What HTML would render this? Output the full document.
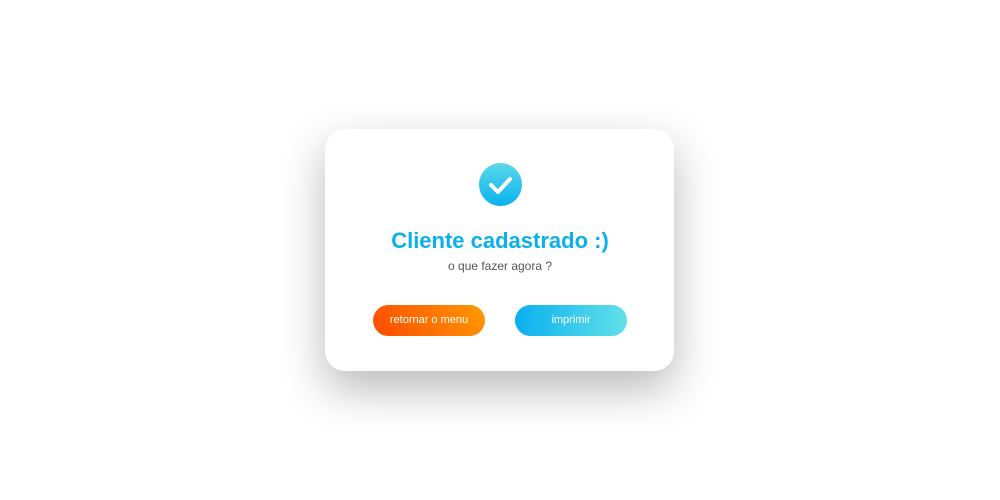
<!DOCTYPE html>
<html><head><style>
body{margin:0;width:1000px;height:500px;background:#fff;position:relative;font-family:"Liberation Sans",sans-serif;overflow:hidden}
.card{position:absolute;left:325px;top:129px;width:349px;height:242px;background:#fff;border-radius:20px;box-shadow:0 18px 45px rgba(0,0,0,.28)}
.ic{position:absolute;left:479px;top:163px;width:43px;height:43px;border-radius:50%;background:linear-gradient(#5ad8ea,#0ab2ef)}
h1{position:absolute;left:0;width:1000px;top:228px;margin:0;text-align:center;font-size:22px;color:#0ab0ec;font-weight:bold}
.sub{position:absolute;left:0;width:1000px;top:259px;text-align:center;font-size:12px;color:#555}
.b{position:absolute;top:305px;height:31px;border-radius:16px;color:#fff;font-size:11px;line-height:31px;text-align:center}
.b1{left:373px;width:112px;background:linear-gradient(60deg,#ff4a00,#ff9a00)}
.b2{left:515px;width:112px;background:linear-gradient(90deg,#0ab0ef,#62e0e8)}
</style></head><body>
<div class="card"></div>
<div class="ic"><svg width="43" height="43"><path d="M12 22l7 7 12-13" stroke="#fff" stroke-width="4" fill="none" stroke-linecap="round" stroke-linejoin="round"/></svg></div>
<h1>Cliente cadastrado :)</h1>
<div class="sub">o que fazer agora ?</div>
<div class="b b1">retornar o menu</div>
<div class="b b2">imprimir</div>
</body></html>
